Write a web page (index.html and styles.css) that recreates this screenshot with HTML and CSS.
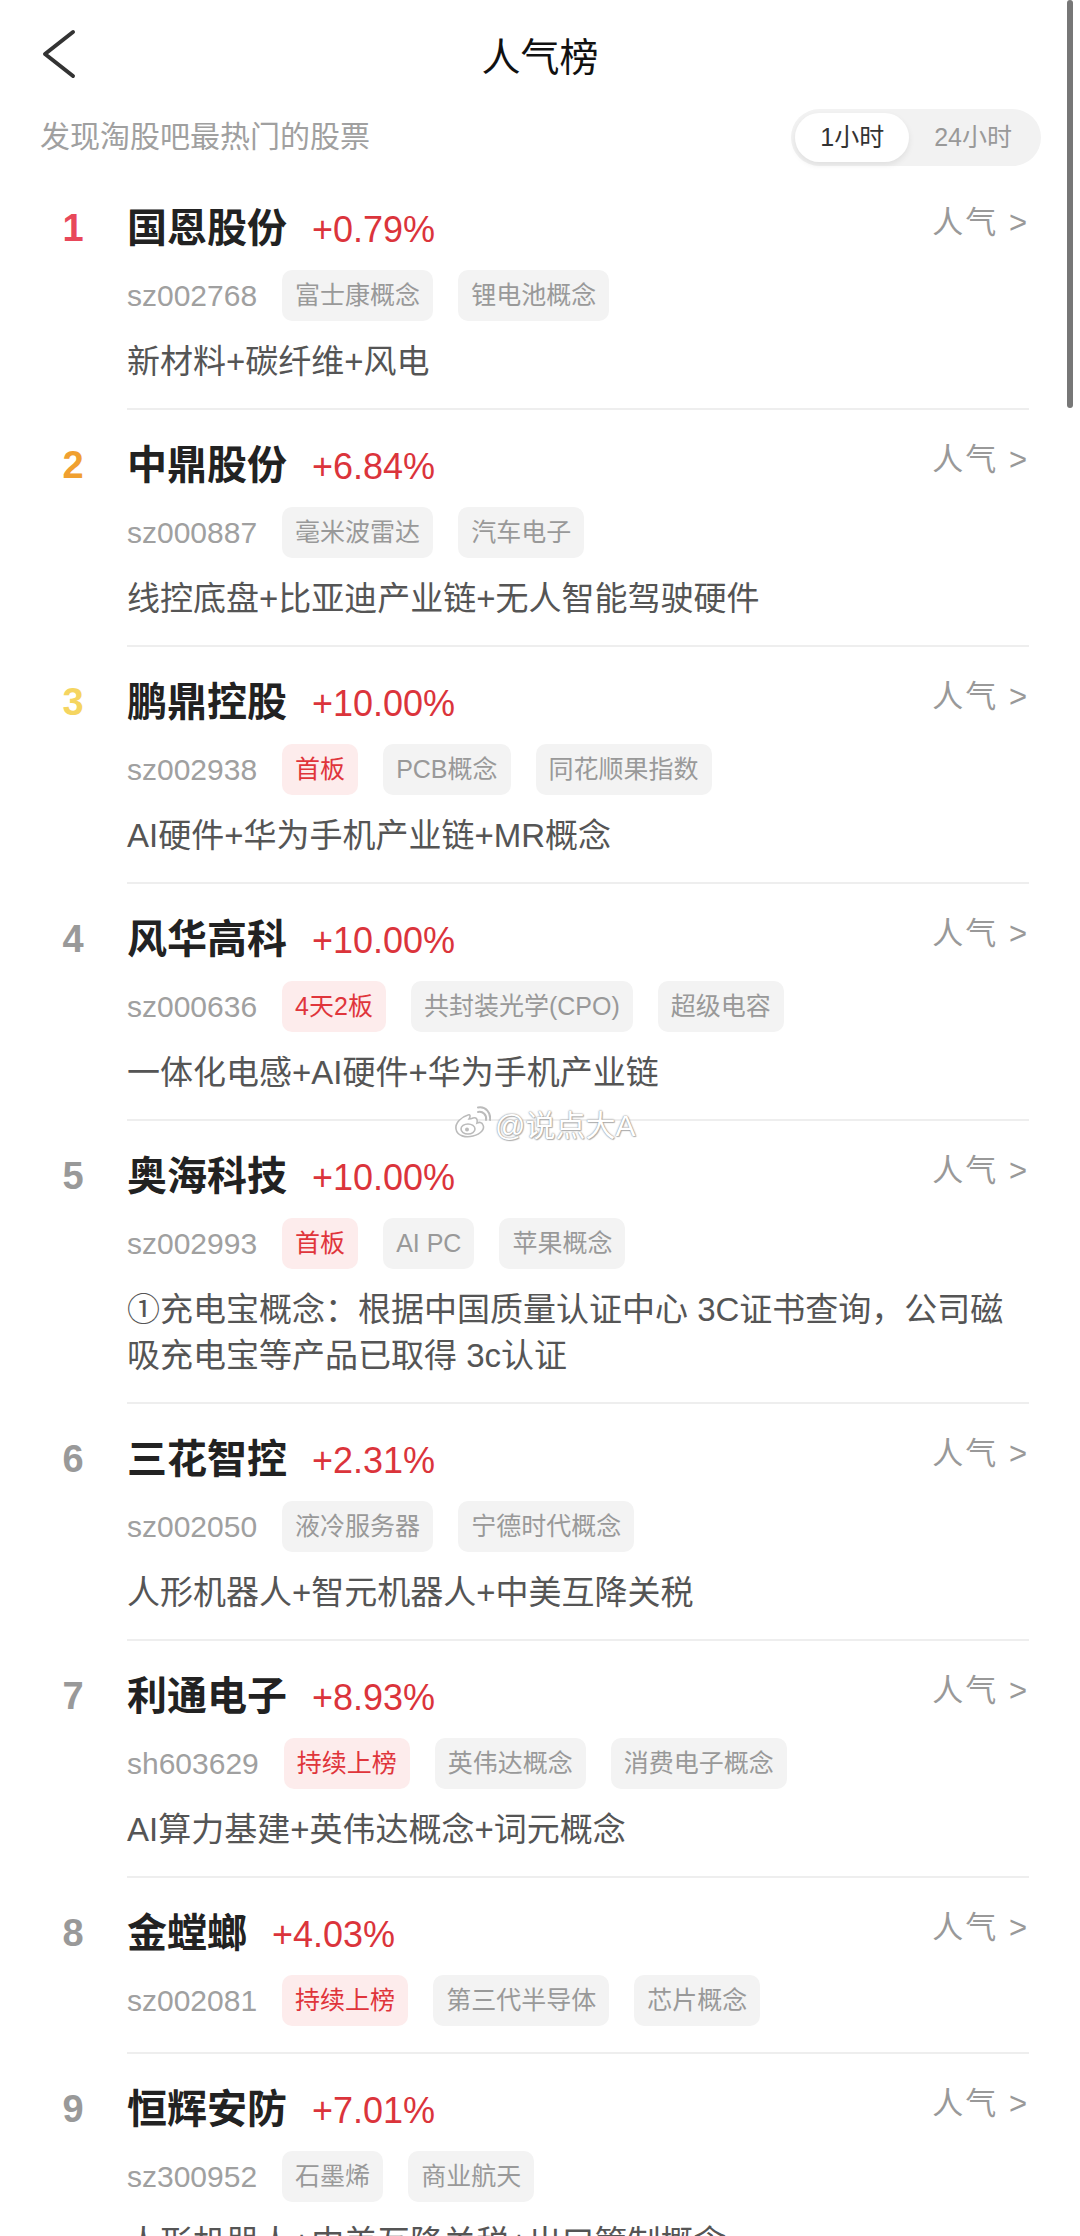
FILE: index.html
```html
<!DOCTYPE html>
<html lang="zh-CN">
<head>
    <meta charset="UTF-8">
    <meta name="viewport" content="width=device-width, initial-scale=1.0">
    <title>人气榜</title>
    <link rel="stylesheet" href="styles.css">
</head>
<body>
    <div class="header">
        <div class="back">
            <svg width="40" height="50" viewBox="0 0 40 50">
                <path d="M35 3 L7 25 L35 47" fill="none" stroke="#333" stroke-width="4" stroke-linecap="round" stroke-linejoin="round"/>
            </svg>
        </div>
        <div class="title">人气榜</div>
        <div></div>
    </div>

    <div class="sub-row">
        <span class="subtitle">发现淘股吧最热门的股票</span>
        <div class="toggle">
            <span class="seg active">1小时</span>
            <span class="seg">24小时</span>
        </div>
    </div>

    <div id="list" class="list"></div>

    <!-- marca d'água por cima do conteúdo -->
    <div class="watermark">
        <svg width="38" height="34" viewBox="0 0 38 34">
            <path d="M15 9 C8 11 2 17 3 23 C4 30 13 32 20 30 C28 28 32 23 30 19 C29 16 26 16 24 17 C25 13 23 11 20 12 C18 13 17 13 16 13 C18 10 17 8 15 9 Z" fill="#fff" stroke="#bbb" stroke-width="1.6"/>
            <ellipse cx="15" cy="23" rx="7" ry="5" fill="none" stroke="#bbb" stroke-width="1.6"/>
            <circle cx="14" cy="23.5" r="2" fill="#bbb"/>
            <path d="M25 6 C30 5 34 9 33 14" fill="none" stroke="#bbb" stroke-width="2" stroke-linecap="round"/>
            <path d="M25 1.5 C33 0 38 7 37 14" fill="none" stroke="#bbb" stroke-width="2" stroke-linecap="round"/>
        </svg>
        <span>@说点大A</span>
    </div>

    <div class="scrollbar"></div>

    <script>
        const stocks = [
            { name: "国恩股份", change: "+0.79%", code: "sz002768", tags: ["富士康概念", "锂电池概念"], desc: "新材料+碳纤维+风电" },
            { name: "中鼎股份", change: "+6.84%", code: "sz000887", tags: ["毫米波雷达", "汽车电子"], desc: "线控底盘+比亚迪产业链+无人智能驾驶硬件" },
            { name: "鹏鼎控股", change: "+10.00%", code: "sz002938", hot: "首板", tags: ["PCB概念", "同花顺果指数"], desc: "AI硬件+华为手机产业链+MR概念" },
            { name: "风华高科", change: "+10.00%", code: "sz000636", hot: "4天2板", tags: ["共封装光学(CPO)", "超级电容"], desc: "一体化电感+AI硬件+华为手机产业链" },
            { name: "奥海科技", change: "+10.00%", code: "sz002993", hot: "首板", tags: ["AI PC", "苹果概念"], desc: "①充电宝概念：根据中国质量认证中心 3C证书查询，公司磁吸充电宝等产品已取得 3c认证" },
            { name: "三花智控", change: "+2.31%", code: "sz002050", tags: ["液冷服务器", "宁德时代概念"], desc: "人形机器人+智元机器人+中美互降关税" },
            { name: "利通电子", change: "+8.93%", code: "sh603629", hot: "持续上榜", tags: ["英伟达概念", "消费电子概念"], desc: "AI算力基建+英伟达概念+词元概念" },
            { name: "金螳螂", change: "+4.03%", code: "sz002081", hot: "持续上榜", tags: ["第三代半导体", "芯片概念"], desc: "" },
            { name: "恒辉安防", change: "+7.01%", code: "sz300952", tags: ["石墨烯", "商业航天"], desc: "人形机器人+中美互降关税+出口管制概念" }
        ];

        const list = document.getElementById('list');

        stocks.forEach((s, i) => {
            const item = document.createElement('div');
            item.classList.add('item');

            const rank = i + 1;
            const rankClass = rank <= 3 ? `rank-${rank}` : '';

            // tags: o primeiro em vermelho quando existir
            let tagsHtml = `<span class="code">${s.code}</span>`;
            if (s.hot) {
                tagsHtml += `<span class="tag tag-red">${s.hot}</span>`;
            }
            tagsHtml += s.tags.map(t => `<span class="tag">${t}</span>`).join('');

            item.innerHTML = `
                <div class="rank ${rankClass}">${rank}</div>
                <div class="body ${s.desc ? '' : 'no-desc'}">
                    <div class="head">
                        <span class="name">${s.name}</span>
                        <span class="change">${s.change}</span>
                        <span class="popular">人气 &gt;</span>
                    </div>
                    <div class="tags">${tagsHtml}</div>
                    ${s.desc ? `<div class="desc">${s.desc}</div>` : ''}
                </div>
            `;
            list.appendChild(item);
        });
    </script>
</body>
</html>
```

FILE: styles.css
```css
* {
    margin: 0;
    padding: 0;
    box-sizing: border-box;
}

body {
    font-family: "Liberation Sans", "Noto Sans CJK SC", sans-serif;
    background-color: #fff;
    color: #222;
    width: 1080px;
    height: 2236px;
    overflow: hidden;
    position: relative;
}

/* Cabeçalho */
.header {
    display: grid;
    grid-template-columns: 1fr auto 1fr;
    align-items: center;
    height: 106px;
    padding-top: 10px;
}

.back {
    padding-left: 38px;
    margin-top: -8px;
    display: flex;
}

.title {
    font-size: 39px;
    line-height: 96px;
    color: #111;
}

.sub-row {
    display: flex;
    align-items: center;
    justify-content: space-between;
    height: 57px;
    margin-top: 4px;
    padding: 0 39px 0 40px;
}

.subtitle {
    font-size: 30px;
    color: #a0a0a0;
    margin-bottom: 10px;
}

.toggle {
    display: flex;
    background-color: #f2f2f2;
    border-radius: 29px;
    padding: 4px;
    margin-top: -2px;
}

.toggle .seg {
    font-size: 25px;
    line-height: 49px;
    padding: 0 25px;
    color: #999;
    border-radius: 25px;
}

.toggle .seg.active {
    background-color: #fff;
    color: #333;
    box-shadow: 0 3px 6px rgba(0, 0, 0, 0.08);
}

/* Lista */
.list {
    margin-top: 6px;
    padding: 0 51px 0 40px;
}

.item {
    display: flex;
}

.rank {
    width: 66px;
    margin-right: 21px;
    padding-top: 27px;
    line-height: 56px;
    font-size: 38px;
    font-weight: bold;
    text-align: center;
    color: #999;
}

.rank-1 {
    color: #e8485a;
}

.rank-2 {
    color: #f0a030;
}

.rank-3 {
    color: #f5d560;
}

.body {
    flex: 1;
    padding: 27px 0 23px;
    border-bottom: 2px solid #eee;
}

.body.no-desc {
    padding-bottom: 26px;
}

.head {
    display: flex;
    align-items: baseline;
    height: 56px;
}

.name {
    font-size: 40px;
    line-height: 56px;
    font-weight: bold;
    color: #222;
}

.change {
    font-size: 36px;
    margin-left: 25px;
    color: #db343b;
}

.popular {
    margin-left: auto;
    align-self: flex-start;
    font-size: 31px;
    line-height: 46px;
    letter-spacing: 2px;
    color: #999;
}

.tags {
    display: flex;
    align-items: center;
    gap: 25px;
    height: 51px;
    margin-top: 14px;
}

.code {
    font-size: 30px;
    color: #a0a0a0;
}

.tag {
    font-size: 25px;
    line-height: 51px;
    padding: 0 13px;
    border-radius: 10px;
    background-color: #f3f3f3;
    color: #999;
}

.tag-red {
    background-color: #fdecec;
    color: #e0353b;
}

.desc {
    margin-top: 18px;
    font-size: 33px;
    line-height: 46px;
    color: #555;
}

/* Marca d'água */
.watermark {
    position: absolute;
    left: 453px;
    top: 1101px;
    display: flex;
    align-items: center;
    gap: 4px;
}

.watermark span {
    font-size: 30px;
    color: #fff;
    text-shadow: 0 0 2px #999, 0 0 1px #999, 1px 1px 1px #bbb;
}

/* Barra de rolagem */
.scrollbar {
    position: absolute;
    top: 0;
    right: 7px;
    width: 6px;
    height: 408px;
    border-radius: 3px;
    background-color: #777;
}
```
